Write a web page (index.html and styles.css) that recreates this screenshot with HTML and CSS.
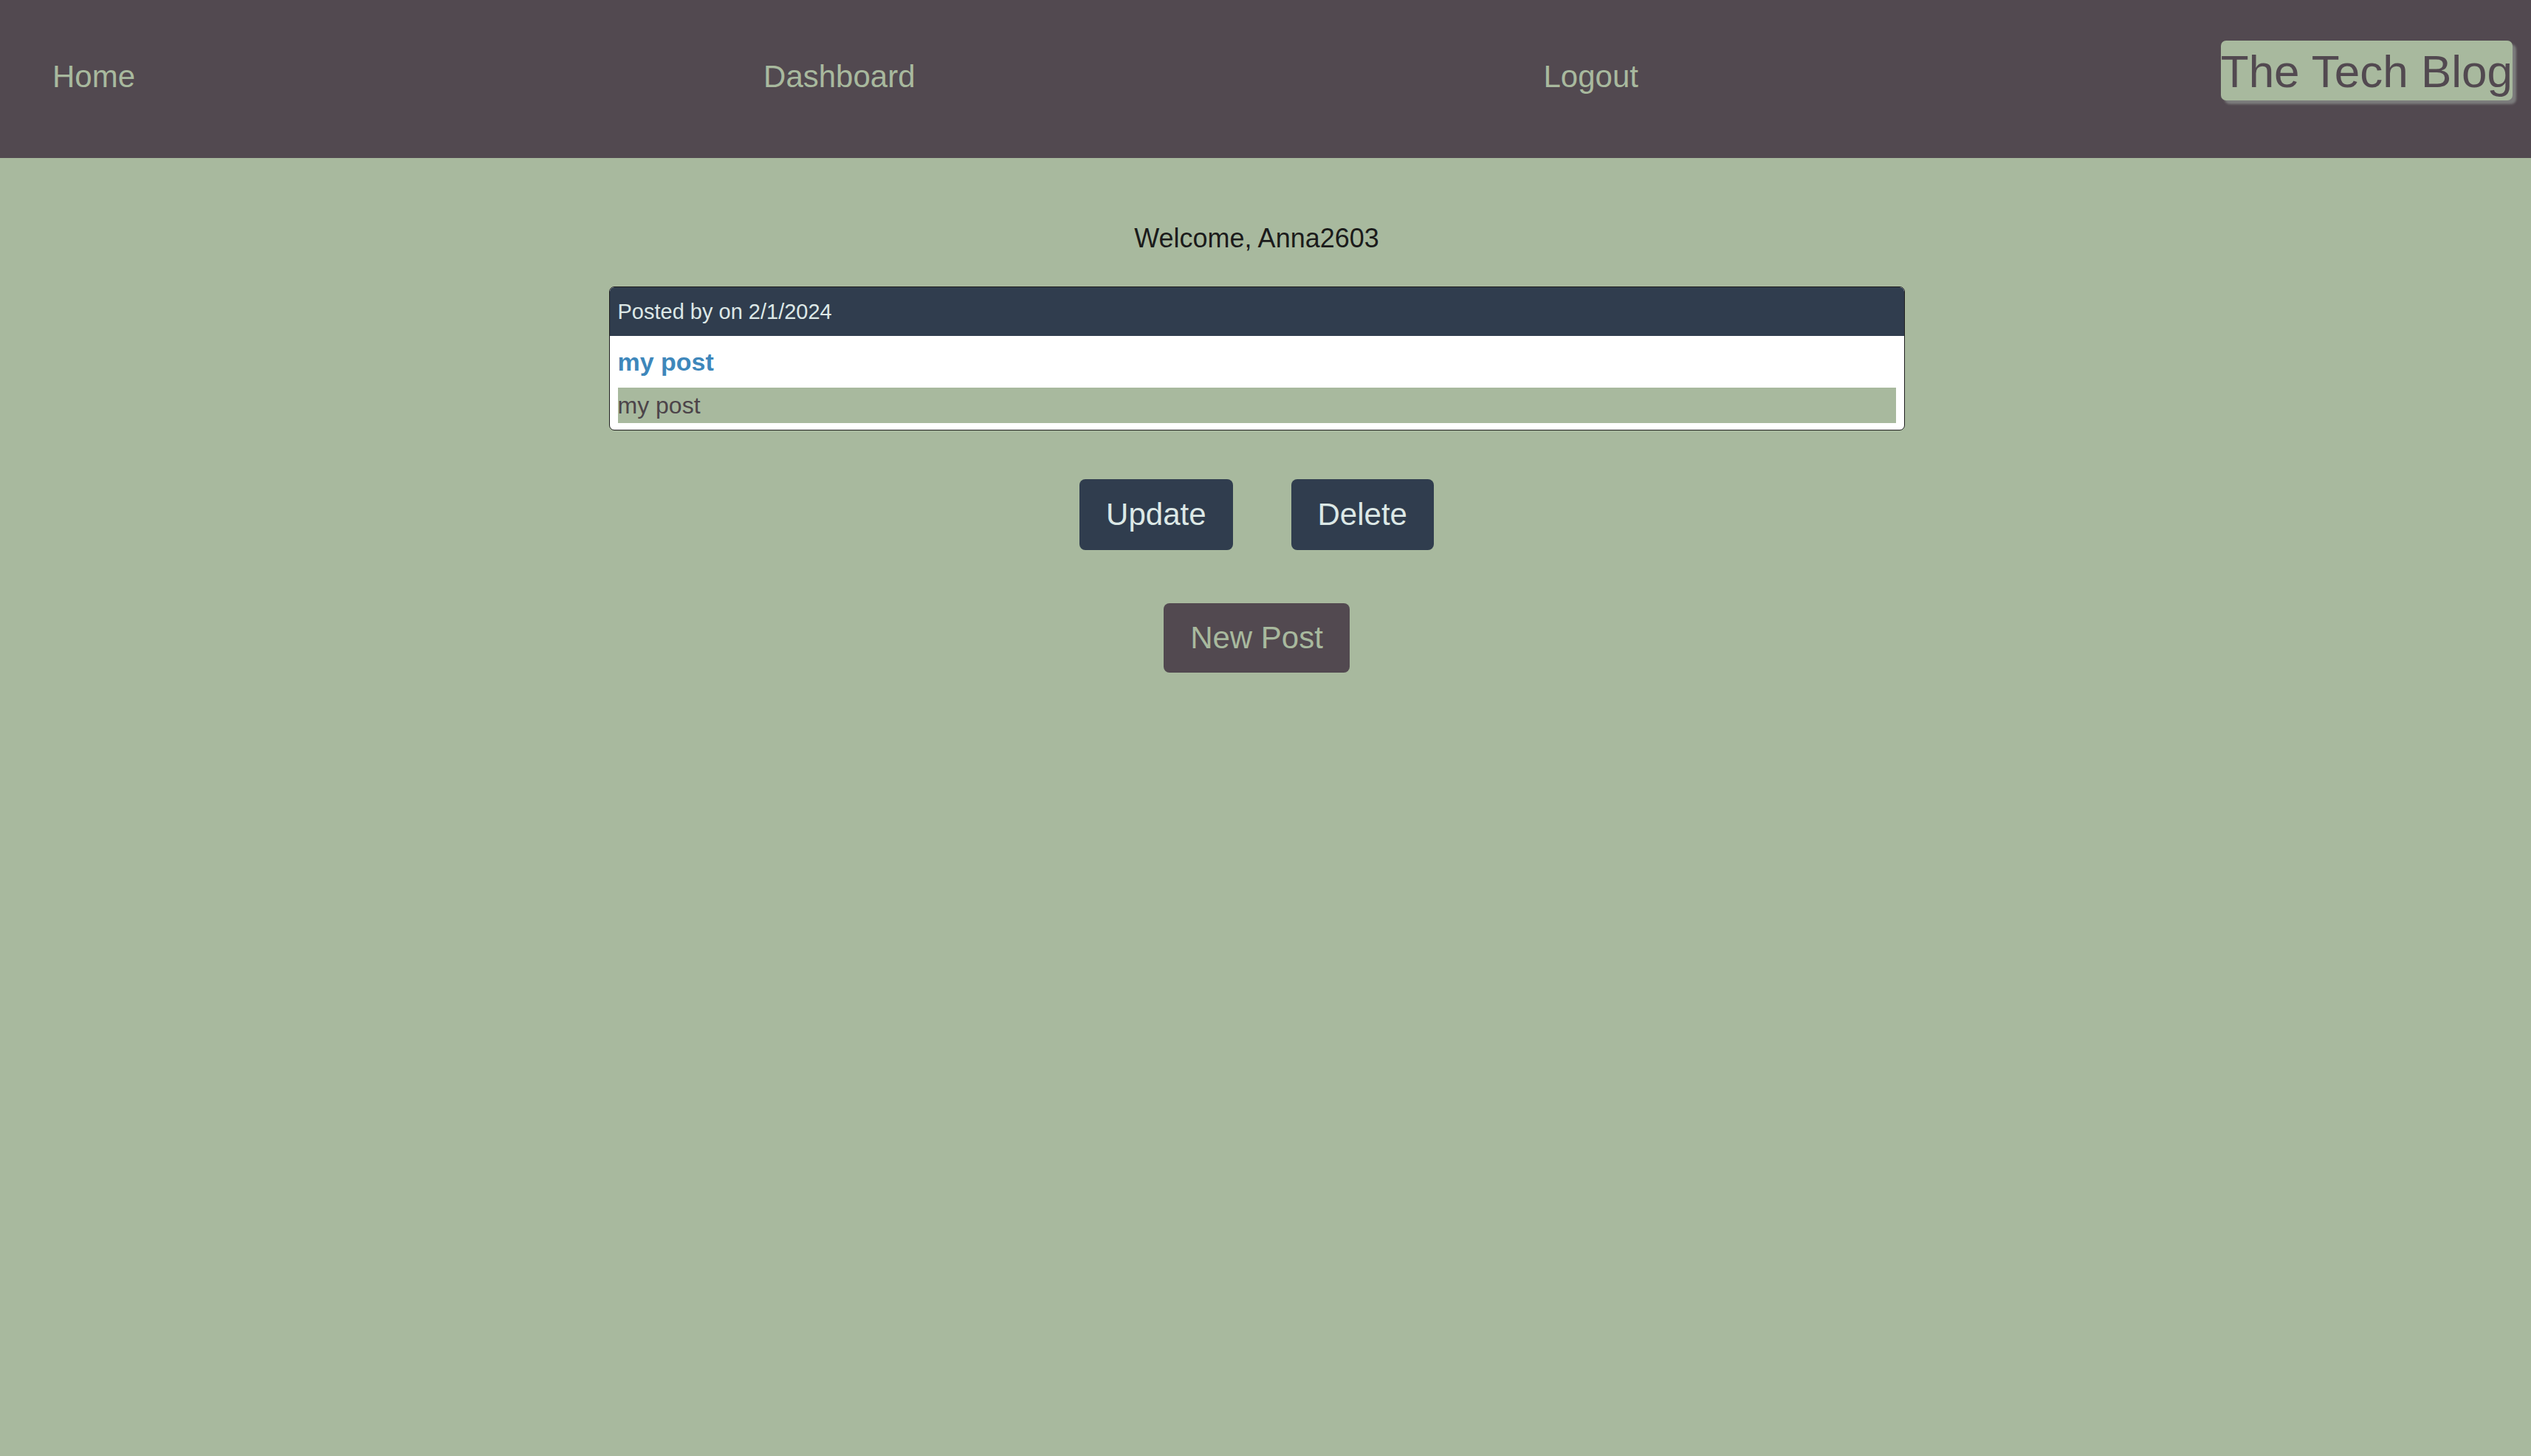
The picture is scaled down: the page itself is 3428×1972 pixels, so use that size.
FILE: index.html
```html
<!DOCTYPE html>
<html lang="en">
<head>
<meta charset="utf-8">
<title>The Tech Blog - Dashboard</title>
<link rel="stylesheet" href="styles.css">
</head>
<body>
<header class="site-header">
  <nav class="nav">
    <a class="nav-link" href="#">Home</a>
    <a class="nav-link" href="#">Dashboard</a>
    <a class="nav-link" href="#">Logout</a>
  </nav>
  <h1 class="logo">The Tech Blog</h1>
</header>
<main class="dashboard">
  <p class="welcome">Welcome, Anna2603</p>
  <article class="post-card">
    <div class="post-meta">Posted by on 2/1/2024</div>
    <div class="post-body">
      <h2 class="post-title">my post</h2>
      <p class="post-content">my post</p>
    </div>
  </article>
  <div class="post-actions">
    <button class="btn btn-dark">Update</button>
    <button class="btn btn-dark">Delete</button>
  </div>
  <button class="btn btn-new">New Post</button>
</main>
</body>
</html>
```

FILE: styles.css
```css
html, body {
  margin: 0;
  padding: 0;
}

body {
  background: #a8b99e;
  font-family: "Liberation Sans", Arial, Helvetica, sans-serif;
  min-height: 1972px;
}

.site-header {
  background: #524950;
  height: 214px;
  display: flex;
  align-items: flex-start;
  justify-content: space-between;
  padding-right: 25px;
}

.nav {
  display: flex;
  gap: 851px;
  padding-left: 71px;
  margin-top: 80px;
}

.nav-link {
  color: #a8b99e;
  text-decoration: none;
  font-size: 42px;
  line-height: 47px;
}

.logo {
  margin: 55px 0 0;
  background: #a8b99e;
  color: #524950;
  font-size: 62px;
  font-weight: 400;
  line-height: 78px;
  padding-top: 3px;
  border-radius: 7px;
  box-shadow: 5px 5px 3px #7c7c7c;
  white-space: nowrap;
}

.dashboard {
  display: flex;
  flex-direction: column;
  align-items: center;
  padding-right: 24px;
}

.welcome {
  margin: 88px 0 0;
  font-size: 36px;
  line-height: 41px;
  color: #1b1b1b;
}

.post-card {
  margin-top: 45px;
  width: 1755px;
  box-sizing: border-box;
  border: 1px solid #1f1f1f;
  border-radius: 7px;
  overflow: hidden;
  background: #ffffff;
}

.post-meta {
  background: #303d4e;
  color: #dde8e7;
  font-size: 29px;
  line-height: 66px;
  padding: 0 11px;
}

.post-body {
  padding: 0 11px 9px;
}

.post-title {
  margin: 0;
  color: #3e87bb;
  font-size: 34px;
  font-weight: 700;
  line-height: 70px;
}

.post-content {
  margin: 0;
  background: #a8b99e;
  color: #4c4449;
  font-size: 32px;
  line-height: 48px;
}

.post-actions {
  display: flex;
  gap: 79px;
  margin-top: 66px;
}

.btn {
  font-family: "Liberation Sans", Arial, Helvetica, sans-serif;
  font-size: 42px;
  height: 96px;
  line-height: 96px;
  padding: 0 36px;
  border: none;
  border-radius: 8px;
  cursor: pointer;
}

.btn-dark {
  background: #303d4e;
  color: #dce8e6;
}

.btn-new {
  margin-top: 72px;
  height: 94px;
  line-height: 94px;
  background: #524950;
  color: #a8b99e;
}
```
